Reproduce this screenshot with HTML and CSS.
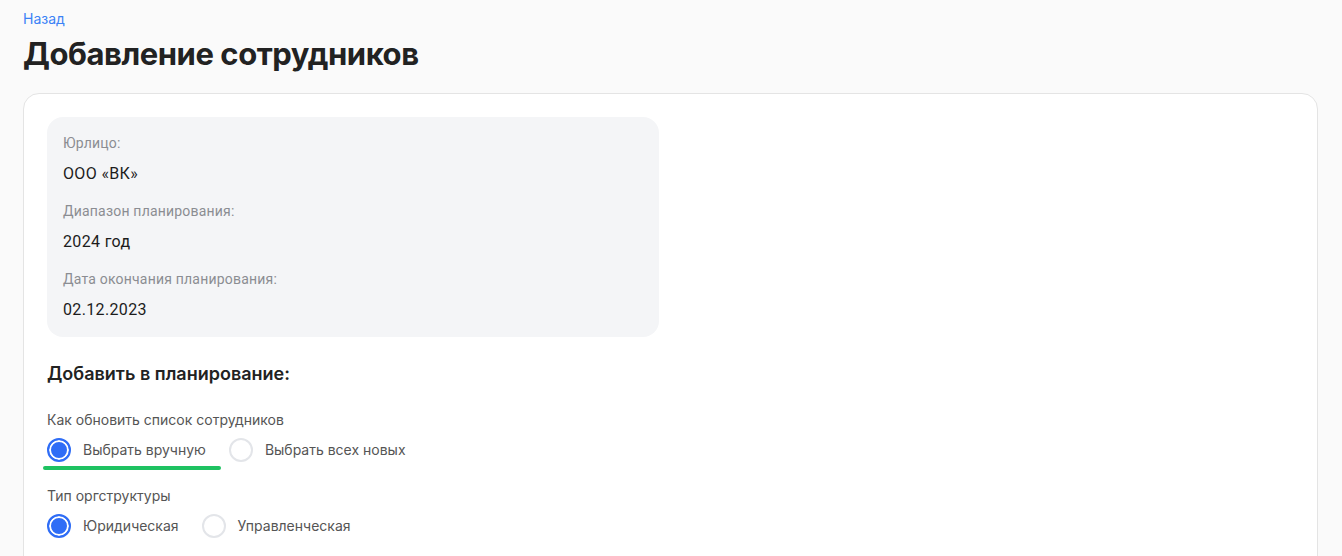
FILE: index.html
```html
<!DOCTYPE html>
<html lang="ru">
<head>
<meta charset="utf-8">
<title>Добавление сотрудников</title>
<link rel="stylesheet" href="styles.css">
</head>
<body>
<div class="page">
  <a class="back" href="#">Назад</a>
  <h1 class="title">Добавление сотрудников</h1>
  <div class="card">
    <div class="info">
      <div class="info-label">Юрлицо:</div>
      <div class="info-value">ООО «ВК»</div>
      <div class="info-label">Диапазон планирования:</div>
      <div class="info-value">2024 год</div>
      <div class="info-label">Дата окончания планирования:</div>
      <div class="info-value">02.12.2023</div>
    </div>
    <h2 class="section">Добавить в планирование:</h2>
    <div class="field">
      <div class="field-label">Как обновить список сотрудников</div>
      <div class="radios">
        <label class="radio active"><span class="dot checked"></span>Выбрать вручную</label>
        <label class="radio"><span class="dot"></span>Выбрать всех новых</label>
      </div>
    </div>
    <div class="field">
      <div class="field-label">Тип оргструктуры</div>
      <div class="radios">
        <label class="radio"><span class="dot checked"></span>Юридическая</label>
        <label class="radio"><span class="dot"></span>Управленческая</label>
      </div>
    </div>
  </div>
</div>
</body>
</html>
```

FILE: styles.css
```css
* { box-sizing: border-box; }
html, body { margin: 0; padding: 0; }
body {
  background: #fafafa;
  font-family: Inter, "Noto Sans", sans-serif;
  color: #1f1f1f;
  height: 556px;
  overflow: hidden;
}
.page { padding: 10px 24px 0 23px; }
.back {
  display: block;
  color: #3b82f6;
  font-size: 14px;
  line-height: 18px;
  text-decoration: none;
}
.title {
  margin: 7px 0 0;
  font-size: 31px;
  line-height: 38px;
  font-weight: 700;
  color: #222;
  letter-spacing: -0.45px;
}
.card {
  margin-top: 20px;
  background: #fff;
  border: 1px solid #e4e4e4;
  border-radius: 16px;
  padding: 23px 23px 40px;
  min-height: 480px;
}
.info {
  width: 612px;
  background: #f4f5f7;
  border-radius: 16px;
  padding: 16px 16px 17px;
  font-family: Roboto, "Noto Sans", sans-serif;
}
.info-label {
  font-size: 14px;
  line-height: 20px;
  color: #8b8d92;
  letter-spacing: 0.2px;
}
.info-value {
  font-size: 16px;
  line-height: 20px;
  color: #1c1c1c;
  margin-top: 11px;
  margin-bottom: 17px;
  letter-spacing: 0.35px;
}
.info-value:last-child { margin-bottom: 0; }
.section {
  margin: 25px 0 0;
  font-size: 18px;
  line-height: 24px;
  font-weight: 600;
  color: #222;
}
.field { margin-top: 25px; }
.field + .field { margin-top: 25px; }
.field-label {
  font-size: 14px;
  line-height: 18px;
  color: #555;
}
.radios {
  display: flex;
  gap: 23px;
  margin-top: 9px;
}
.radio {
  position: relative;
  display: flex;
  align-items: center;
  gap: 12px;
  font-size: 14px;
  line-height: 22px;
  color: #555;
  height: 24px;
}
.dot {
  width: 24px;
  height: 24px;
  border-radius: 50%;
  border: 2px solid #e3e5e9;
  background: #fff;
  flex: none;
}
.dot.checked {
  border-color: #2f6df6;
  background: #2f6df6;
  box-shadow: inset 0 0 0 2px #fff;
}
.radio.active::after {
  content: "";
  position: absolute;
  left: -4px;
  right: -15px;
  bottom: -8px;
  height: 4px;
  border-radius: 2px;
  background: #1ec261;
}
```
